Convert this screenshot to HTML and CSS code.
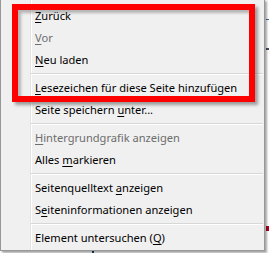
FILE: index.html
```html
<!DOCTYPE html>
<html>
<head>
<meta charset="utf-8">
<link rel="stylesheet" href="styles.css">
</head>
<body>
<div class="page">
  <div class="bg-marks">
    <span class="mark m1"></span>
    <span class="mark m2"></span>
    <span class="mark m3"></span>
    <span class="mark m4"></span>
  </div>
  <div class="menu">
    <div class="gutter"></div>
    <div class="item"><u>Z</u>urück</div>
    <div class="item disabled"><u>V</u>or</div>
    <div class="item"><u>N</u>eu laden</div>
    <div class="sep"></div>
    <div class="item"><u>L</u>esezeichen für diese Seite hinzufügen</div>
    <div class="item">Seite speichern <u>u</u>nter...</div>
    <div class="sep"></div>
    <div class="item disabled"><u>H</u>intergrundgrafik anzeigen</div>
    <div class="item">Alles <u>m</u>arkieren</div>
    <div class="sep"></div>
    <div class="item">Seitenquelltext <u>a</u>nzeigen</div>
    <div class="item">S<u>e</u>iteninformationen anzeigen</div>
    <div class="sep"></div>
    <div class="item">Element untersuchen (<u>Q</u>)</div>
  </div>
  <div class="highlight"></div>
</div>
</body>
</html>
```

FILE: styles.css
```css
html, body {
  margin: 0;
  padding: 0;
  background: #ffffff;
  overflow: hidden;
}

.page {
  position: relative;
  width: 269px;
  height: 253px;
  overflow: hidden;
  font-family: "Noto Sans", "Open Sans", sans-serif;
  font-size: 11.1px;
}

.bg-marks {
  position: absolute;
  left: 0;
  top: 0;
  width: 269px;
  height: 253px;
}

.mark {
  position: absolute;
  display: block;
}
.m1 { left: 266px; top: 19px; width: 3px; height: 1px; background: #2a6fa8; }
.m2 { left: 266px; top: 48px; width: 3px; height: 2px; background: #444c66; }
.m3 { left: 266px; top: 226px; width: 3px; height: 5px; background: #b00020; }
.m4 { left: 92px; top: 250px; width: 2px; height: 3px; background: #1d3d6a; }

.menu {
  position: relative;
  margin-top: -1px;
  width: 263px;
  height: 245px;
  padding-top: 5px;
  background: #f0f0f0;
  border: 1px solid #979797;
  box-shadow: 2px 2px 2px rgba(0, 0, 0, 0.35);
  display: flex;
  flex-direction: column;
}

.gutter {
  position: absolute;
  left: 29px;
  top: 0;
  bottom: 0;
  width: 1px;
  background: #e2e3e3;
  border-right: 1px solid #ffffff;
}

.item {
  height: 22px;
  line-height: 22px;
  padding-left: 34px;
  color: #000000;
  white-space: nowrap;
}

.item u {
  text-decoration: underline;
  text-underline-offset: 2px;
}

.disabled {
  color: #6d6d6d;
}

.sep {
  height: 6px;
  margin-left: 30px;
  margin-right: 1px;
  position: relative;
}
.sep::before {
  content: "";
  position: absolute;
  left: 0;
  right: 0;
  top: 2px;
  height: 1px;
  background: #d7d7d7;
  border-bottom: 1px solid #ffffff;
}

.highlight {
  position: absolute;
  left: 12px;
  top: 4px;
  width: 231px;
  height: 86px;
  border: 6px solid #ff0000;
  box-shadow: 3px 3px 3px rgba(0, 0, 0, 0.35), inset 3px 3px 3px rgba(0, 0, 0, 0.25);
}
```
